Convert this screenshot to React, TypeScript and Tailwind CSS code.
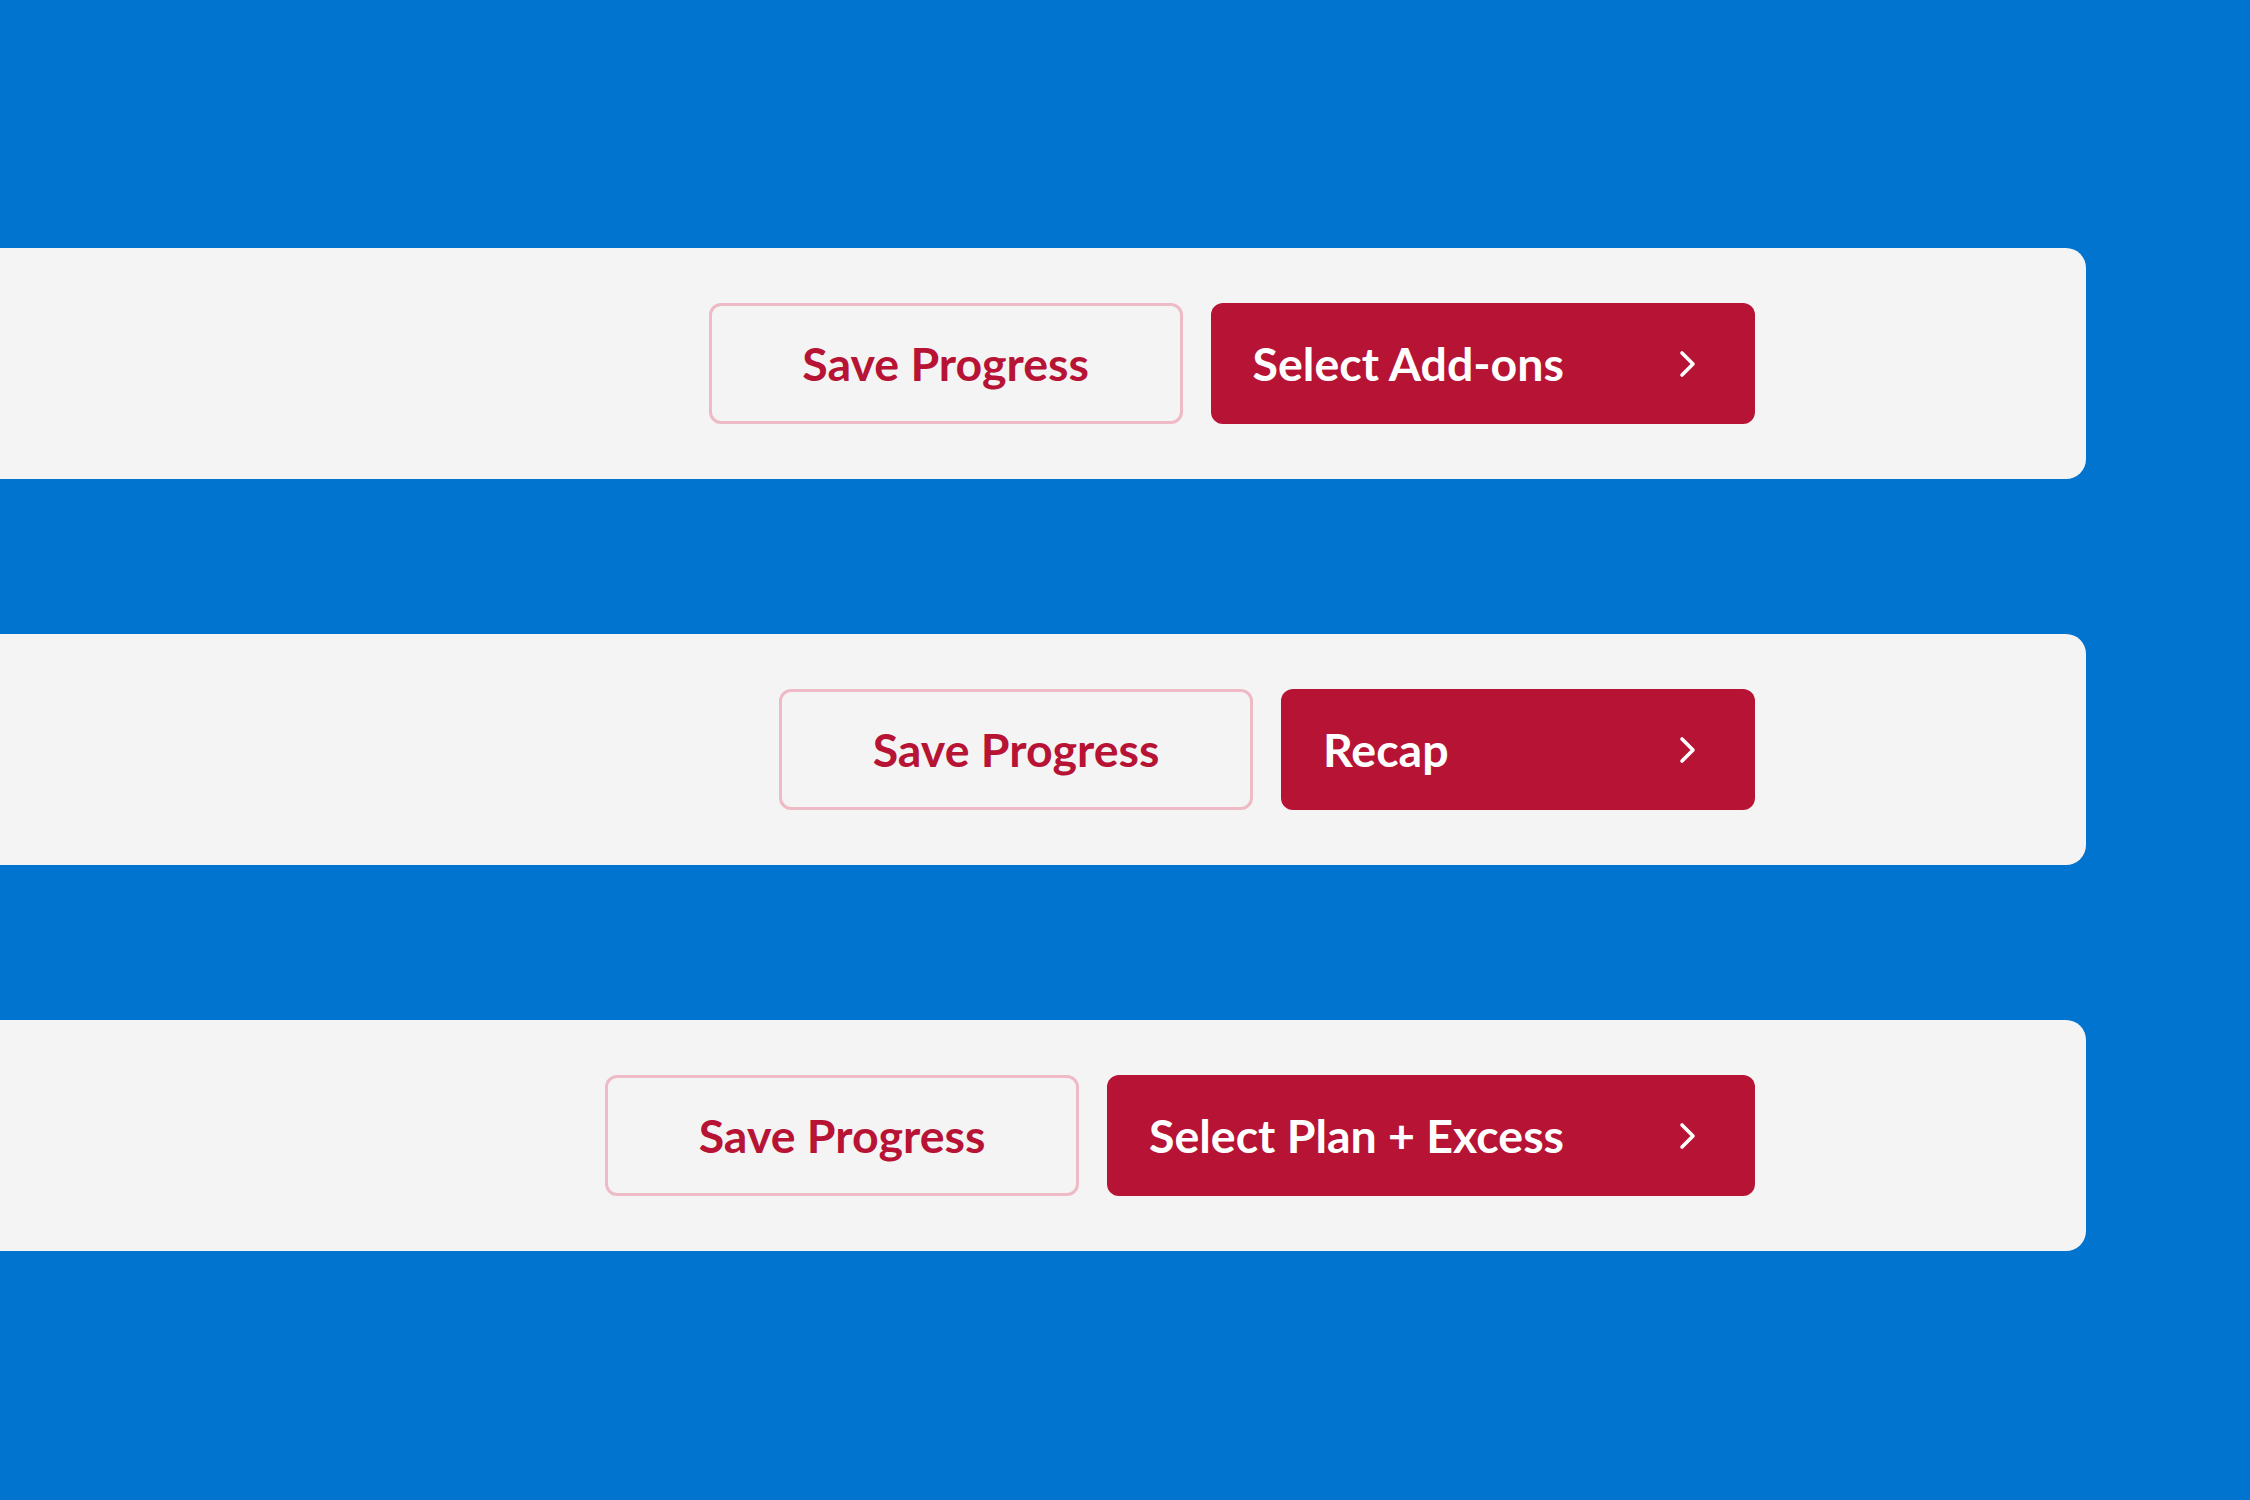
const steps = ['Select Add-ons', 'Recap', 'Select Plan + Excess'];

function Chevron() {
  return (
    <svg width="17" height="28" viewBox="0 0 17 28" fill="none" stroke="currentColor" strokeWidth="3.6" strokeLinecap="round" strokeLinejoin="round">
      <path d="M3 3l11 11-11 11" />
    </svg>
  );
}

function FooterBar({ next }: { next: string }) {
  return (
    <div className="w-[2086px] h-[231px] bg-[#f4f4f4] rounded-r-[20px] flex items-center justify-end pr-[331px] gap-[28px]">
      <button className="w-[474px] h-[121px] border-[3px] border-[#edbac5] rounded-[12px] text-[#b71334] text-[46.5px] font-bold">
        Save Progress
      </button>
      <button className="min-w-[474px] h-[121px] bg-[#b71334] rounded-[12px] text-white text-[46.5px] font-bold flex items-center justify-between gap-[115px] pl-[42px] pr-[59px]">
        <span>{next}</span>
        <Chevron />
      </button>
    </div>
  );
}

export default function App() {
  return (
    <div className="w-[2250px] h-[1500px] bg-[#0074cf] pt-[248px] flex flex-col gap-[155px] font-['Lato',_sans-serif]">
      {steps.map((s) => (
        <FooterBar key={s} next={s} />
      ))}
    </div>
  );
}
